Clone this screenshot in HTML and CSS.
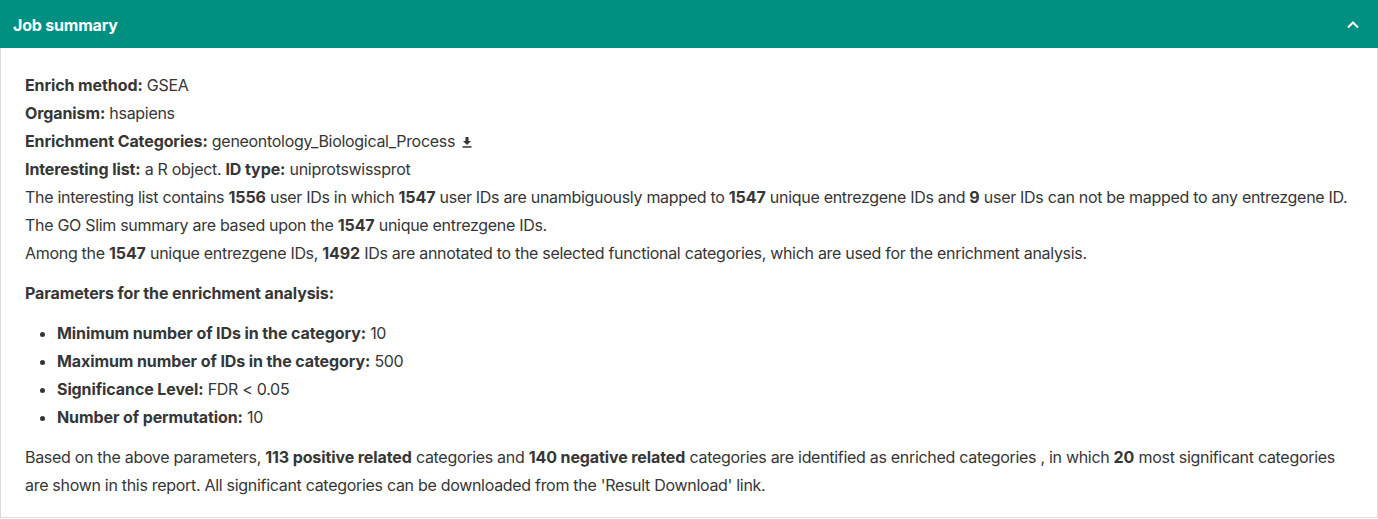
FILE: index.html
```html
<!DOCTYPE html>
<html lang="en">
<head>
<meta charset="utf-8">
<title>Job summary</title>
<link rel="stylesheet" href="styles.css">
</head>
<body>
<div class="card">
  <div class="card-header">
    <span class="card-title">Job summary</span>
    <svg class="chevron" width="14" height="10" viewBox="0 0 14 10" aria-hidden="true">
      <path d="M2 7.5 L7 2.5 L12 7.5" fill="none" stroke="#fff" stroke-width="2"/>
    </svg>
  </div>
  <div class="card-body">
    <p class="line"><b>Enrich method:</b> GSEA</p>
    <p class="line"><b>Organism:</b> hsapiens</p>
    <p class="line"><b>Enrichment Categories:</b> geneontology_Biological_Process <svg class="dl" width="12" height="12" viewBox="0 0 12 12" aria-hidden="true"><path d="M4.5 1 H7.5 V5 H10 L6 9 L2 5 H4.5 Z" fill="#363636"/><rect x="1.5" y="10.2" width="9" height="1.5" fill="#363636"/></svg></p>
    <p class="line"><b>Interesting list:</b> a R object. <b>ID type:</b> uniprotswissprot</p>
    <p class="line">The interesting list contains <b>1556</b> user IDs in which <b>1547</b> user IDs are unambiguously mapped to <b>1547</b> unique entrezgene IDs and <b>9</b> user IDs can not be mapped to any entrezgene ID.</p>
    <p class="line">The GO Slim summary are based upon the <b>1547</b> unique entrezgene IDs.</p>
    <p class="line">Among the <b>1547</b> unique entrezgene IDs, <b>1492</b> IDs are annotated to the selected functional categories, which are used for the enrichment analysis.</p>
    <p class="section"><b>Parameters for the enrichment analysis:</b></p>
    <ul class="params">
      <li><b>Minimum number of IDs in the category:</b> 10</li>
      <li><b>Maximum number of IDs in the category:</b> 500</li>
      <li><b>Significance Level:</b> FDR &lt; 0.05</li>
      <li><b>Number of permutation:</b> 10</li>
    </ul>
    <p class="section">Based on the above parameters, <b>113 positive related</b> categories and <b>140 negative related</b> categories are identified as enriched categories , in which <b>20</b> most significant categories are shown in this report. All significant categories can be downloaded from the 'Result Download' link.</p>
  </div>
</div>
</body>
</html>
```

FILE: styles.css
```css
html, body {
  margin: 0;
  padding: 0;
  background: #ffffff;
}

body {
  font-family: Inter, "Liberation Sans", sans-serif;
  font-size: 16px;
  line-height: 28px;
  letter-spacing: -0.3px;
  color: #363636;
}

.card {
  width: 1378px;
  height: 518px;
  box-sizing: border-box;
  border: 1px solid #dbdbdb;
  border-top: none;
  background: #fff;
}

.card-header {
  display: flex;
  align-items: center;
  justify-content: space-between;
  height: 48px;
  margin: 0 -1px;
  padding: 0 18px 0 13px;
  background: #009082;
  color: #fff;
}

.card-title {
  font-weight: 700;
  font-size: 16px;
  letter-spacing: -0.2px;
  margin-top: 2px;
}

.chevron {
  display: block;
  margin-top: 1px;
}

.card-body {
  padding: 23px 24px 18px 24px;
}

.card-body p {
  margin: 0;
}

.card-body b {
  font-weight: 700;
  letter-spacing: -0.1px;
}

.section {
  margin-top: 12px !important;
}

.params {
  margin: 12px 0 0 0;
  padding: 0 0 0 32px;
}

.params li {
  margin: 0;
}

.dl {
  vertical-align: -1px;
  margin-left: 2px;
}
```
